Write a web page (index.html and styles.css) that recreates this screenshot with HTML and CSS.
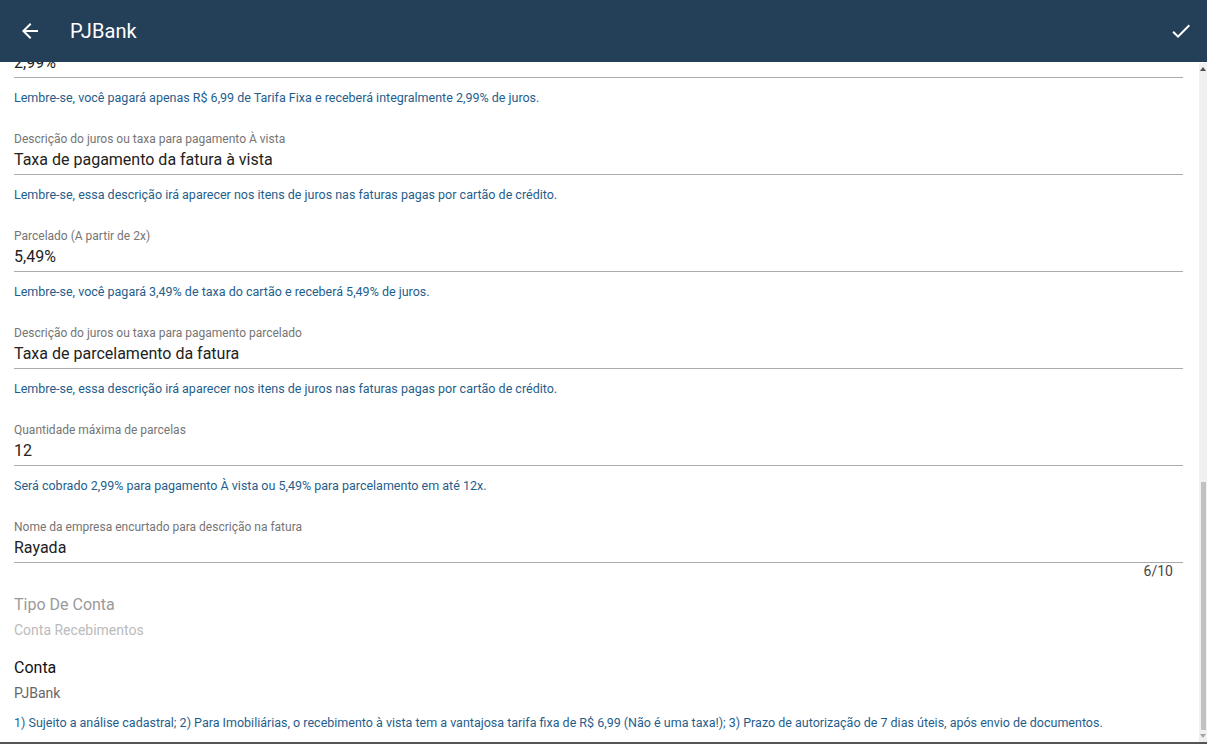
FILE: index.html
```html
<!DOCTYPE html>
<html lang="pt-BR">
<head>
    <meta charset="UTF-8">
    <meta name="viewport" content="width=device-width, initial-scale=1.0">
    <title>PJBank</title>
    <link rel="stylesheet" href="styles.css">
</head>
<body>
    <div class="toolbar">
        <button class="icon-btn back-btn" aria-label="Voltar">
            <svg viewBox="0 0 24 24" width="24" height="24"><path d="M20 11H7.83l5.59-5.59L12 4l-8 8 8 8 1.41-1.41L7.83 13H20v-2z"/></svg>
        </button>
        <div class="toolbar-title">PJBank</div>
        <button class="icon-btn save-btn" aria-label="Salvar">
            <svg viewBox="0 0 24 24" width="24" height="24"><path d="M9 16.17L4.83 12l-1.42 1.41L9 19 21 7l-1.41-1.41z"/></svg>
        </button>
    </div>

    <div class="main">
        <div class="content" id="content">
            <div class="field">
                <div class="field-label">Taxa do boleto</div>
                <div class="field-input">R$ 6,99</div>
                <div class="field-hint">Valor cobrado por boleto pago.</div>
            </div>
            <div class="field">
                <div class="field-label">Juros ao mês</div>
                <div class="field-input">1,00%</div>
                <div class="field-hint">Juros aplicados sobre faturas pagas após o vencimento.</div>
            </div>
            <div class="field">
                <div class="field-label">Multa por atraso</div>
                <div class="field-input">2,00%</div>
                <div class="field-hint">Multa aplicada sobre faturas pagas após o vencimento.</div>
            </div>
            <div class="field">
                <div class="field-label">Desconto até o vencimento</div>
                <div class="field-input">0,00%</div>
                <div class="field-hint">Desconto concedido para pagamentos até a data de vencimento.</div>
            </div>
            <div class="field">
                <div class="field-label">Dias para protesto</div>
                <div class="field-input">0</div>
                <div class="field-hint">Deixe 0 para não protestar as faturas vencidas.</div>
            </div>
            <div class="field">
                <div class="field-label">Instruções do boleto</div>
                <div class="field-input">Não receber após 30 dias do vencimento</div>
                <div class="field-hint">Essas instruções irão aparecer no boleto.</div>
            </div>
            <div class="field">
                <div class="field-label">Descrição da taxa do boleto</div>
                <div class="field-input">Tarifa bancária</div>
                <div class="field-hint">Lembre-se, essa descrição irá aparecer nos itens das faturas pagas por boleto.</div>
            </div>
            <div class="field">
                <div class="field-label">Cartão de crédito</div>
                <div class="field-input">Habilitado</div>
                <div class="field-hint">Permite o pagamento das faturas por cartão de crédito.</div>
            </div>
            <div class="field">
                <div class="field-label">Tarifa fixa do cartão</div>
                <div class="field-input">R$ 6,99</div>
                <div class="field-hint">Valor cobrado por fatura paga à vista no cartão de crédito.</div>
            </div>
            <div class="field">
                <div class="field-label">Taxa do cartão</div>
                <div class="field-input">3,49%</div>
                <div class="field-hint">Valor cobrado por fatura parcelada no cartão de crédito.</div>
            </div>
            <div class="field">
                <div class="field-label">À vista</div>
                <div class="field-input">2,99%</div>
                <div class="field-hint">Lembre-se, você pagará apenas R$ 6,99 de Tarifa Fixa e receberá integralmente 2,99% de juros.</div>
            </div>
            <div class="field">
                <div class="field-label">Descrição do juros ou taxa para pagamento À vista</div>
                <div class="field-input">Taxa de pagamento da fatura à vista</div>
                <div class="field-hint">Lembre-se, essa descrição irá aparecer nos itens de juros nas faturas pagas por cartão de crédito.</div>
            </div>
            <div class="field">
                <div class="field-label">Parcelado (A partir de 2x)</div>
                <div class="field-input">5,49%</div>
                <div class="field-hint">Lembre-se, você pagará 3,49% de taxa do cartão e receberá 5,49% de juros.</div>
            </div>
            <div class="field">
                <div class="field-label">Descrição do juros ou taxa para pagamento parcelado</div>
                <div class="field-input">Taxa de parcelamento da fatura</div>
                <div class="field-hint">Lembre-se, essa descrição irá aparecer nos itens de juros nas faturas pagas por cartão de crédito.</div>
            </div>
            <div class="field">
                <div class="field-label">Quantidade máxima de parcelas</div>
                <div class="field-input">12</div>
                <div class="field-hint">Será cobrado 2,99% para pagamento À vista ou 5,49% para parcelamento em até 12x.</div>
            </div>
            <div class="field field-counted">
                <div class="field-label">Nome da empresa encurtado para descrição na fatura</div>
                <div class="field-input">Rayada</div>
                <div class="field-counter">6/10</div>
            </div>

            <div class="item item-disabled">
                <div class="item-title">Tipo De Conta</div>
                <div class="item-value">Conta Recebimentos</div>
            </div>
            <div class="item">
                <div class="item-title">Conta</div>
                <div class="item-value">PJBank</div>
            </div>

            <div class="note">1) Sujeito a análise cadastral; 2) Para Imobiliárias, o recebimento à vista tem a vantajosa tarifa fixa de R$ 6,99 (Não é uma taxa!); 3) Prazo de autorização de 7 dias úteis, após envio de documentos.</div>
        </div>

        <div class="scrollbar">
            <div class="scroll-btn scroll-up"></div>
            <div class="scroll-track" id="track">
                <div class="scroll-thumb" id="thumb"></div>
            </div>
            <div class="scroll-btn scroll-down"></div>
        </div>
    </div>

    <script>
        // Mostra o fim do formulário e ajusta a barra de rolagem
        const content = document.getElementById('content');
        const track = document.getElementById('track');
        const thumb = document.getElementById('thumb');

        function updateThumb() {
            const total = content.scrollHeight;
            const visible = content.clientHeight;
            const h = Math.round(track.clientHeight * visible / total);
            const maxScroll = total - visible;
            const offset = maxScroll > 0 ? (track.clientHeight - h) * content.scrollTop / maxScroll : 0;
            thumb.style.height = h + 'px';
            thumb.style.marginTop = Math.round(offset) + 'px';
        }

        content.scrollTop = content.scrollHeight;
        updateThumb();
        content.addEventListener('scroll', updateThumb);
    </script>
</body>
</html>
```

FILE: styles.css
```css
html, body {
    margin: 0;
    height: 100%;
}
body {
    font-family: Roboto, "Noto Sans", Arial, sans-serif;
    background-color: #fff;
    display: flex;
    flex-direction: column;
    overflow: hidden;
}
.toolbar {
    height: 62px;
    flex-shrink: 0;
    background-color: #243f58;
    color: #fff;
    display: flex;
    align-items: center;
    padding: 0 14px 0 18px;
}
.icon-btn {
    background: none;
    border: 0;
    padding: 0;
    width: 24px;
    height: 24px;
    cursor: pointer;
}
.icon-btn svg {
    display: block;
    fill: #fff;
}
.toolbar-title {
    flex-grow: 1;
    margin-left: 28px;
    font-size: 20px;
    font-weight: 400;
    letter-spacing: 0.1px;
}
.main {
    flex-grow: 1;
    min-height: 0;
    display: flex;
    border-bottom: 2px solid #555;
}
.content {
    flex-grow: 1;
    overflow: hidden;
    padding: 90px 16px 12px 14px;
}
.scrollbar {
    width: 8px;
    flex-shrink: 0;
    margin-top: 1px;
    background-color: #f0f0f0;
    display: flex;
    flex-direction: column;
}
.scroll-btn {
    height: 12px;
    display: flex;
    justify-content: flex-end;
    align-items: center;
    padding-right: 1px;
}
.scroll-up::after {
    content: "";
    border-left: 3px solid transparent;
    border-right: 3px solid transparent;
    border-bottom: 4px solid #505050;
}
.scroll-down::after {
    content: "";
    border-left: 3px solid transparent;
    border-right: 3px solid transparent;
    border-top: 4px solid #a3a3a3;
}
.scroll-track {
    flex-grow: 1;
    padding: 0 1px 0 2px;
}
.scroll-thumb {
    background-color: #c1c1c1;
}
.field {
    padding-top: 27px;
}
.field-label {
    font-size: 12px;
    line-height: 14px;
    color: #757575;
}
.field-input {
    margin-top: 4px;
    font-size: 16px;
    line-height: 20px;
    color: #222;
    padding-bottom: 4px;
    border-bottom: 1px solid #ababab;
}
.field-hint {
    margin-top: 13px;
    font-size: 12.5px;
    line-height: 14px;
    color: #1f5e8c;
}
.field-counter {
    text-align: right;
    padding-right: 10px;
    font-size: 14px;
    line-height: 16px;
    color: #444;
}
.item {
    margin-top: 16px;
}
.item + .item {
    margin-top: 18px;
}
.item-title {
    font-size: 16px;
    line-height: 20px;
    color: #111;
}
.item-value {
    margin-top: 5px;
    font-size: 14px;
    line-height: 20px;
    color: #666;
}
.item-disabled .item-title {
    color: #9a9a9a;
}
.item-disabled .item-value {
    color: #bbb;
}
.note {
    margin-top: 13px;
    font-size: 12.5px;
    line-height: 14px;
    color: #1f5e8c;
}
```
